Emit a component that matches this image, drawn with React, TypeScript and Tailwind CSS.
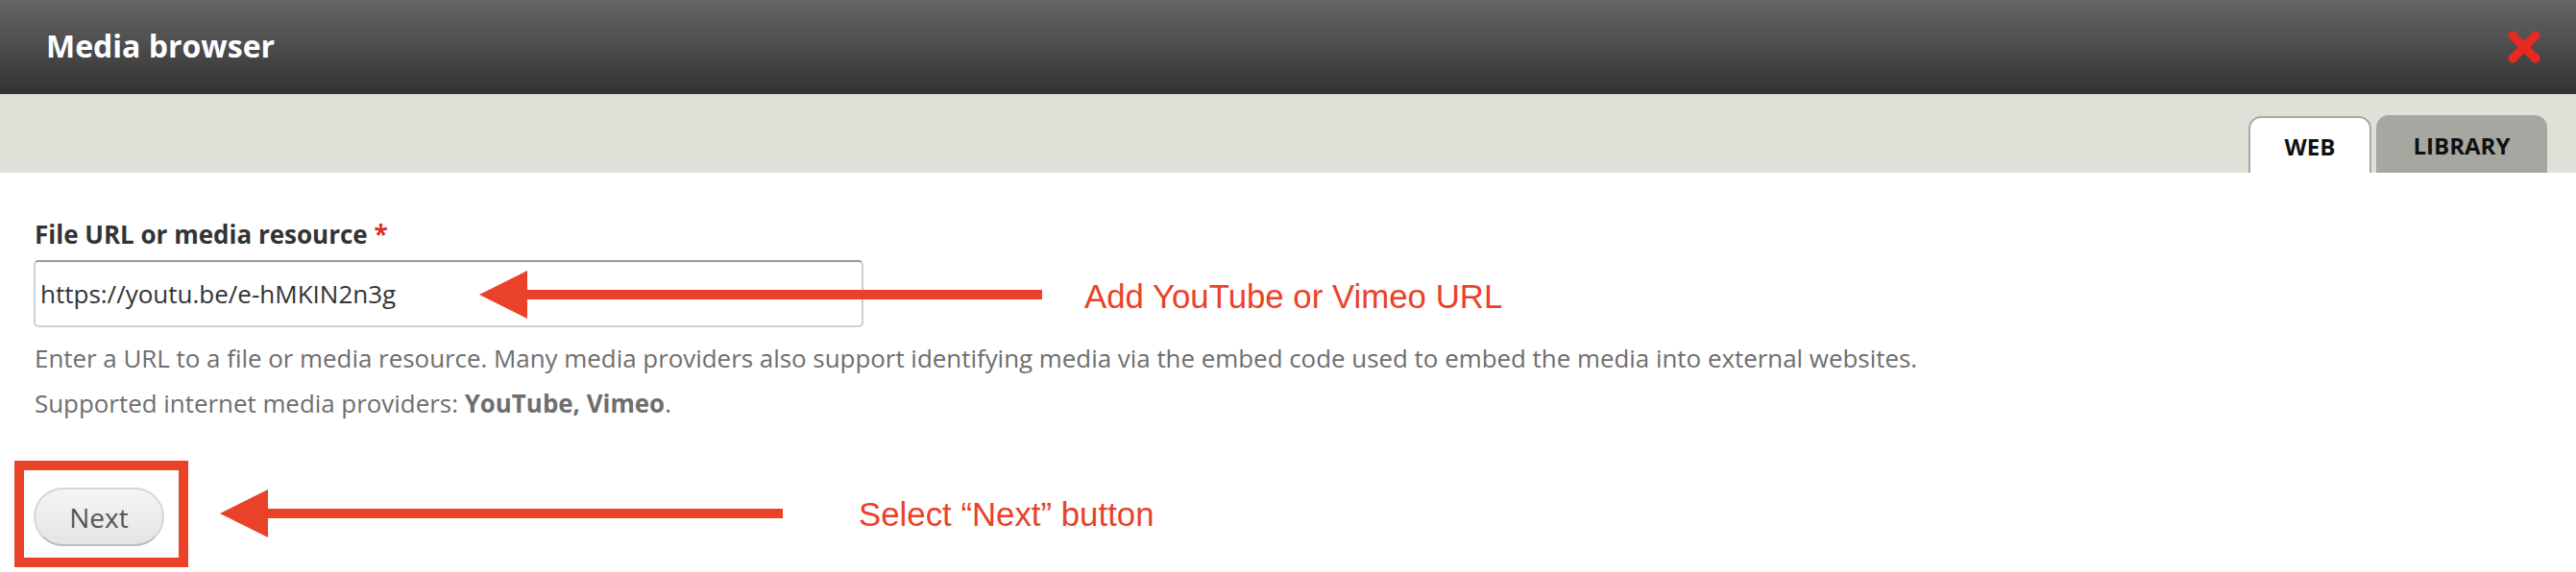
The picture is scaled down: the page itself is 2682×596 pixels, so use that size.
import React from "react";

export default function App() {
  return (
    <div className="relative w-[2682px] h-[596px] overflow-hidden bg-white font-['Open_Sans',sans-serif]">
      {/* Header */}
      <div className="flex h-[98px] items-center justify-between bg-gradient-to-b from-[#666666] to-[#333333] pl-[48px] pr-[36px]">
        <h1 className="text-[32px] font-bold leading-none text-white pb-[2px]">Media browser</h1>
        <svg width="36" height="34" viewBox="0 0 36 34" aria-hidden="true">
          <path d="M6 5 L30 29 M30 5 L6 29" stroke="#e8291f" strokeWidth="9" strokeLinecap="round" />
        </svg>
      </div>

      {/* Tabs band */}
      <div className="flex h-[82px] items-end justify-end gap-[5px] bg-[#e0e0d8] pr-[30px]">
        <div className="flex h-[59px] w-[128px] justify-center rounded-t-[13px] border-2 border-b-0 border-[#a9a9a4] bg-white pt-[14px] text-[24px] font-bold leading-[32px] text-[#111]">
          WEB
        </div>
        <div className="flex h-[60px] w-[178px] justify-center rounded-t-[13px] bg-[#a7a7a2] pt-[16px] text-[24px] font-bold leading-[32px] text-[#111]">
          LIBRARY
        </div>
      </div>

      {/* Content */}
      <div className="pl-[35px] pt-[47px]">
        <label className="block pl-[1px] text-[26px] font-bold leading-[35px] text-[#333]">
          File URL or media resource <span className="text-[#e12a1d]">*</span>
        </label>
        <div className="mt-[9px] flex h-[70px] w-[864px] items-center rounded-[5px] border-2 border-[#cfcfcf] border-t-[#9a9a9a] pl-[5px] text-[26px] leading-[34px] text-[#333]">
          https://youtu.be/e-hMKIN2n3g
        </div>
        <p className="mt-[15px] pl-[1px] text-[25.9px] leading-[35px] text-[#6e6e6e]">
          Enter a URL to a file or media resource. Many media providers also support identifying media via the embed code used to embed the media into external websites.
        </p>
        <p className="mt-[12px] pl-[1px] text-[25.9px] leading-[35px] text-[#6e6e6e]">
          Supported internet media providers: <span className="font-bold">YouTube, Vimeo</span>.
        </p>
        <button className="mt-[70px] flex h-[61px] w-[136px] items-center justify-center rounded-full border-2 border-[#d6d6d6] border-b-[#bdbdbd] bg-gradient-to-b from-[#f5f5f5] to-[#e4e4e4] text-[28px] leading-none text-[#555]">
          Next
        </button>
      </div>

      {/* Annotation: red box around Next */}
      <div className="absolute left-[15px] top-[480px] h-[111px] w-[181px] border-[10px] border-[#ea4228]" />

      {/* Annotation arrows */}
      <svg className="absolute left-0 top-0" width="2682" height="596" aria-hidden="true">
        <polygon points="499,307 549,282 549,332" fill="#ea4228" />
        <rect x="548" y="302" width="537" height="10" fill="#ea4228" />
        <polygon points="229,535 279,510 279,560" fill="#ea4228" />
        <rect x="278" y="530" width="537" height="10" fill="#ea4228" />
      </svg>

      {/* Annotation texts */}
      <div className="absolute left-[1129px] top-[291px] font-['Liberation_Sans',Arial,sans-serif] text-[34.8px] leading-[35px] text-[#ea4228]">
        Add YouTube or Vimeo URL
      </div>
      <div className="absolute left-[894px] top-[518px] font-['Liberation_Sans',Arial,sans-serif] text-[34.8px] leading-[35px] text-[#ea4228]">
        Select “Next” button
      </div>
    </div>
  );
}
